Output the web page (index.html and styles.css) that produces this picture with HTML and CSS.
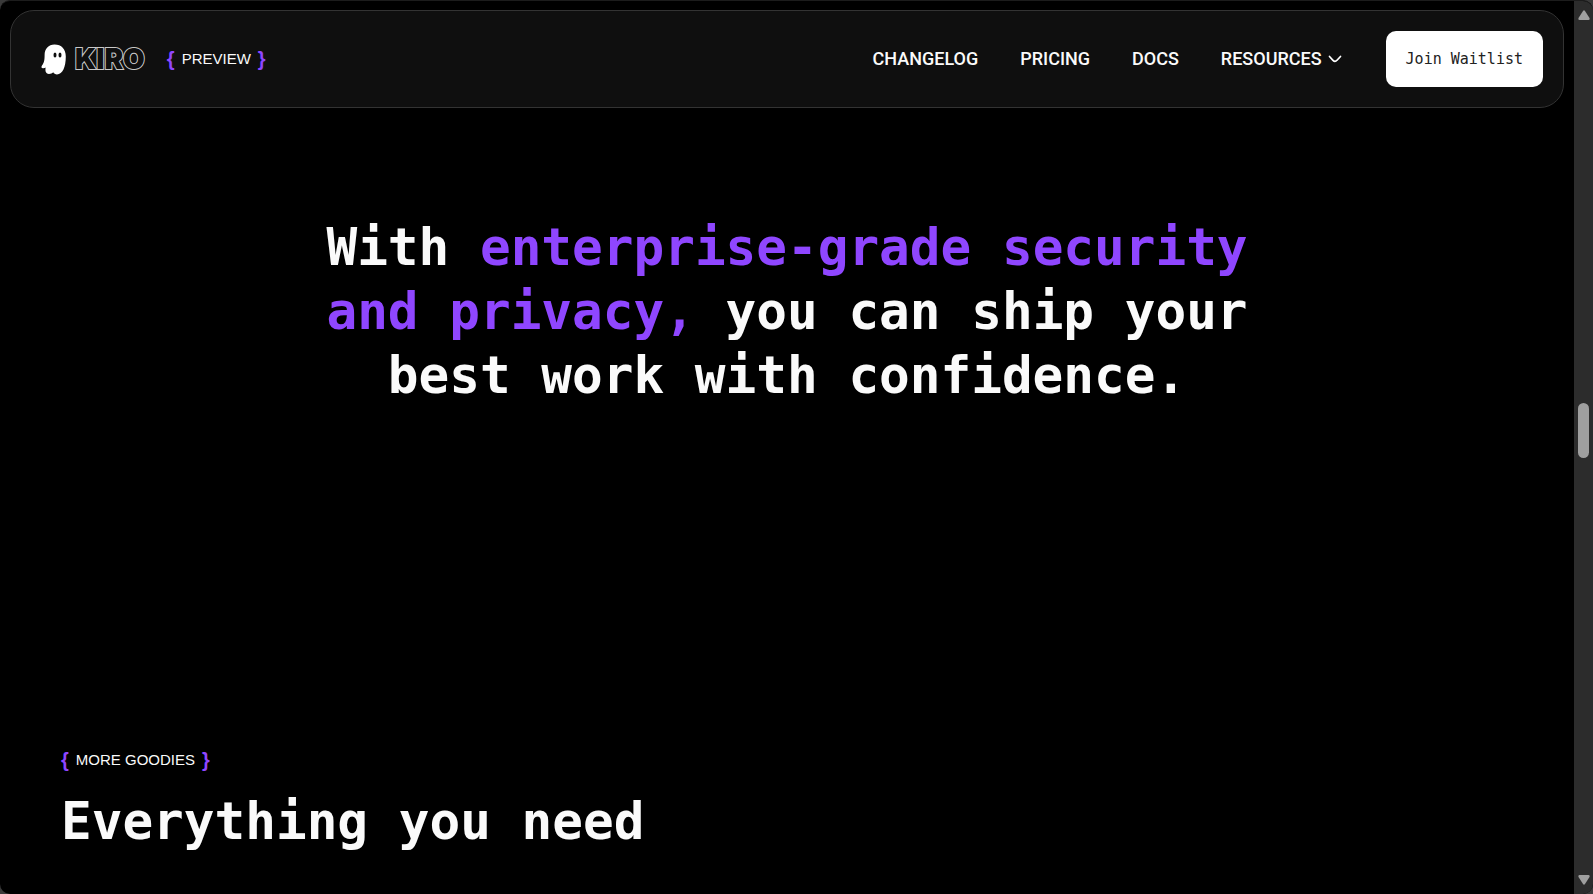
FILE: index.html
```html
<!DOCTYPE html>
<html lang="en">
<head>
    <meta charset="UTF-8">
    <meta name="viewport" content="width=device-width, initial-scale=1.0">
    <title>Kiro</title>
    <link rel="stylesheet" href="styles.css">
</head>
<body>

<div class="window">
    <div class="page">
        <header class="navbar">
            <a href="#" class="logo">
                <svg class="ghost" viewBox="0 0 26 31" width="26" height="31" aria-hidden="true">
                    <path fill="#fff" d="M13.500 0.500C7.500 0.500 3.600 5 3.600 11C3.600 16 3.200 18.500 1 21.500C0 23.200 0.400 24.300 2.200 24.200C3.200 24.200 4 24 4.600 23.600C4.200 26.500 4.200 29.900 8 29.900C9.800 29.900 11.200 29.300 12.200 28.300C13 29.800 14.300 30.400 16 30.400C21.600 30.400 24.800 23 24.800 12.500C24.800 5 20.500 0.500 13.500 0.500Z"/>
                    <ellipse fill="#0f0f0f" cx="14" cy="11" rx="1.500" ry="2.500"/>
                    <ellipse fill="#0f0f0f" cx="19" cy="11" rx="1.500" ry="2.500"/>
                </svg>
                <span class="wordmark">KIRO</span>
            </a>
            <span class="tag"><span class="brace">{</span>PREVIEW<span class="brace">}</span></span>
            <nav class="nav-links">
                <a href="#">CHANGELOG</a>
                <a href="#">PRICING</a>
                <a href="#">DOCS</a>
                <button type="button" class="nav-menu">
                    RESOURCES
                    <svg viewBox="0 0 14 8" width="14" height="8" aria-hidden="true">
                        <path d="M1.500 1.500L5 5.300Q7 7.500 9 5.300L12.500 1.500" fill="none" stroke="#fff" stroke-width="1.700" stroke-linecap="round"/>
                    </svg>
                </button>
            </nav>
            <button type="button" class="join">Join Waitlist</button>
        </header>

        <main>
            <section class="security">
                <h2>With <em>enterprise-grade security and privacy,</em> you can ship your best work with confidence.</h2>
            </section>
            <section class="goodies">
                <span class="tag"><span class="brace">{</span>MORE GOODIES<span class="brace">}</span></span>
                <h2>Everything you need</h2>
            </section>
        </main>
    </div>

    <div class="scrollbar" aria-hidden="true">
        <svg viewBox="0 0 12 10" width="12" height="10"><path d="M5 1Q6 -0.500 7 1L11.500 8Q12 10 10.500 10H1.500Q0 10 0.500 8Z" fill="#9f9f9f"/></svg>
        <div class="track"><div class="thumb"></div></div>
        <svg viewBox="0 0 12 10" width="12" height="10"><path d="M5 9Q6 10.500 7 9L11.500 2Q12 0 10.500 0H1.500Q0 0 0.500 2Z" fill="#9f9f9f"/></svg>
    </div>
</div>

</body>
</html>
```
FILE: styles.css
```css
* {
    box-sizing: border-box;
}
body {
    margin: 0;
    background: #3a3a3a;
    color: #fafafa;
    font-family: Roboto, "Liberation Sans", sans-serif;
}
a {
    color: inherit;
    text-decoration: none;
}
button {
    border: none;
    cursor: pointer;
    font: inherit;
}
h2 {
    margin: 0;
    font-family: "DejaVu Sans Mono", monospace;
    font-size: 51px;
    font-weight: 700;
    line-height: 64px;
}
.window {
    display: flex;
    height: 100vh;
    overflow: hidden;
    border-top: 1px solid #1c1c1c;
    border-radius: 10px;
    background: #000;
}
.page {
    flex: 1;
    padding: 9px 10px;
}

/* Header */
.navbar {
    display: flex;
    align-items: center;
    padding: 20px 20px 20px 30px;
    border: 1px solid #333;
    border-radius: 24px;
    background: #0f0f0f;
}
.logo {
    display: flex;
    align-items: center;
    gap: 8px;
    margin-right: 22px;
}
.ghost {
    display: block;
}
.wordmark {
    font-family: Inter, sans-serif;
    font-size: 28px;
    font-weight: 900;
    line-height: 32px;
    color: #0f0f0f;
    -webkit-text-stroke: 2px #c8c8c8;
    paint-order: stroke fill;
    stroke-linejoin: round;
}
.tag {
    display: inline-flex;
    align-items: center;
    gap: 7px;
    font-family: "Liberation Sans", sans-serif;
    font-size: 15px;
    line-height: 24px;
}
.brace {
    color: #8f46ff;
    font-size: 20px;
    font-weight: 700;
}
.nav-links {
    display: flex;
    align-items: center;
    gap: 42px;
    margin-left: auto;
    font-size: 18px;
    font-weight: 500;
    line-height: 24px;
}
.nav-menu {
    display: flex;
    align-items: center;
    gap: 6px;
    padding: 0;
    background: none;
    color: inherit;
}
.join {
    margin-left: 44px;
    padding: 16px 20px;
    border-radius: 10px;
    background: #fff;
    color: #222;
    font-family: "DejaVu Sans Mono", monospace;
    font-size: 15px;
    line-height: 24px;
}

/* Sections */
.security {
    max-width: 960px;
    margin: 0 auto;
    padding-top: 108px;
    text-align: center;
}
.security em {
    color: #8f46ff;
    font-style: normal;
}
.goodies {
    padding: 340px 51px 0;
}
.goodies h2 {
    margin-top: 18px;
}

/* Scrollbar */
.scrollbar {
    display: flex;
    flex-direction: column;
    align-items: center;
    width: 19px;
    padding: 9px 0;
    background: #2c2c2c;
}
.track {
    flex: 1;
    padding-top: 383px;
}
.thumb {
    width: 11px;
    height: 55px;
    border-radius: 6px;
    background: #9f9f9f;
}
```
